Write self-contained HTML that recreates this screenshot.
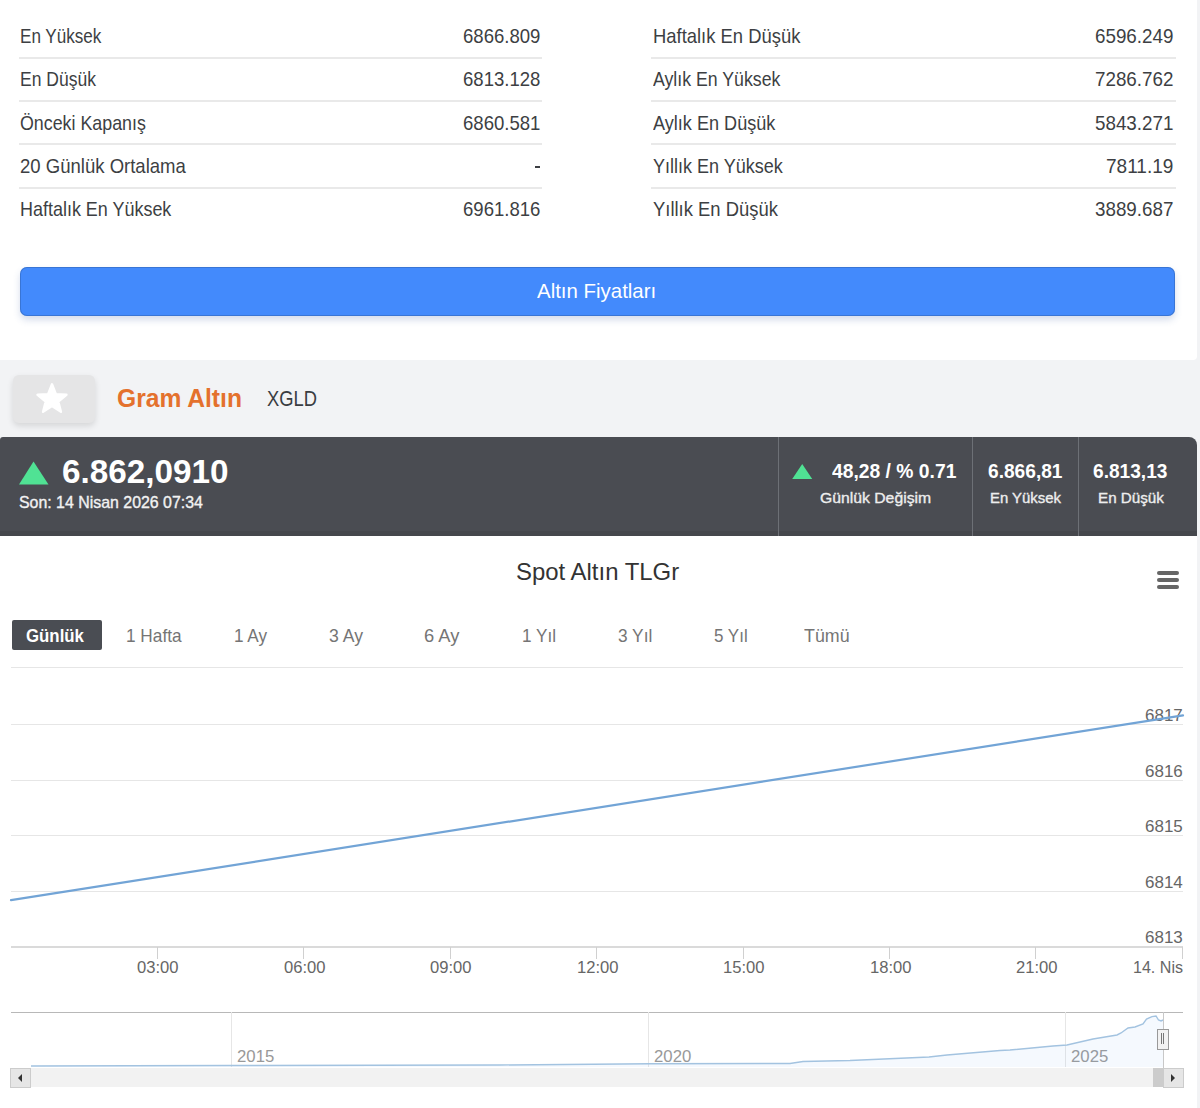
<!DOCTYPE html><html><head><meta charset="utf-8"><style>
html,body{margin:0;padding:0;}
body{width:1200px;height:1108px;position:relative;overflow:hidden;background:#f2f3f5;font-family:"Liberation Sans",sans-serif;}
.t{position:absolute;white-space:nowrap;transform-origin:0 0;}
.b{position:absolute;}
</style></head><body>
<div class="b" style="left:0;top:0;width:1197px;height:360px;background:#fff;border-radius:0 0 4px 0;"></div>
<div class="b" style="left:19px;top:56.8px;width:523px;height:2px;background:#e9e9e9;"></div>
<div class="b" style="left:651px;top:56.8px;width:525px;height:2px;background:#e9e9e9;"></div>
<div class="b" style="left:19px;top:100.1px;width:523px;height:2px;background:#e9e9e9;"></div>
<div class="b" style="left:651px;top:100.1px;width:525px;height:2px;background:#e9e9e9;"></div>
<div class="b" style="left:19px;top:143.4px;width:523px;height:2px;background:#e9e9e9;"></div>
<div class="b" style="left:651px;top:143.4px;width:525px;height:2px;background:#e9e9e9;"></div>
<div class="b" style="left:19px;top:186.7px;width:523px;height:2px;background:#e9e9e9;"></div>
<div class="b" style="left:651px;top:186.7px;width:525px;height:2px;background:#e9e9e9;"></div>
<div class="t" style="left:20.00px;top:25.89px;font-size:20.20px;line-height:20.20px;color:#3d3f43;transform:scaleX(0.8468);">En Yüksek</div>
<div class="t" style="left:462.50px;top:25.89px;font-size:20.20px;line-height:20.20px;color:#3d3f43;transform:scaleX(0.9197);">6866.809</div>
<div class="t" style="left:20.00px;top:69.29px;font-size:20.20px;line-height:20.20px;color:#3d3f43;transform:scaleX(0.8674);">En Düşük</div>
<div class="t" style="left:462.50px;top:69.29px;font-size:20.20px;line-height:20.20px;color:#3d3f43;transform:scaleX(0.9197);">6813.128</div>
<div class="t" style="left:20.00px;top:112.59px;font-size:20.20px;line-height:20.20px;color:#3d3f43;transform:scaleX(0.8834);">Önceki Kapanış</div>
<div class="t" style="left:462.50px;top:112.59px;font-size:20.20px;line-height:20.20px;color:#3d3f43;transform:scaleX(0.9197);">6860.581</div>
<div class="t" style="left:20.00px;top:155.89px;font-size:20.20px;line-height:20.20px;color:#3d3f43;transform:scaleX(0.9180);">20 Günlük Ortalama</div>
<div class="b" style="left:535px;top:166.0px;width:5px;height:1.6px;background:#3d3f43;"></div>
<div class="t" style="left:20.00px;top:199.19px;font-size:20.20px;line-height:20.20px;color:#3d3f43;transform:scaleX(0.8893);">Haftalık En Yüksek</div>
<div class="t" style="left:462.50px;top:199.19px;font-size:20.20px;line-height:20.20px;color:#3d3f43;transform:scaleX(0.9197);">6961.816</div>
<div class="t" style="left:652.50px;top:25.89px;font-size:20.20px;line-height:20.20px;color:#3d3f43;transform:scaleX(0.9120);">Haftalık En Düşük</div>
<div class="t" style="left:1095.00px;top:25.89px;font-size:20.20px;line-height:20.20px;color:#3d3f43;transform:scaleX(0.9315);">6596.249</div>
<div class="t" style="left:652.50px;top:69.29px;font-size:20.20px;line-height:20.20px;color:#3d3f43;transform:scaleX(0.8776);">Aylık En Yüksek</div>
<div class="t" style="left:1095.00px;top:69.29px;font-size:20.20px;line-height:20.20px;color:#3d3f43;transform:scaleX(0.9315);">7286.762</div>
<div class="t" style="left:652.50px;top:112.59px;font-size:20.20px;line-height:20.20px;color:#3d3f43;transform:scaleX(0.8964);">Aylık En Düşük</div>
<div class="t" style="left:1095.00px;top:112.59px;font-size:20.20px;line-height:20.20px;color:#3d3f43;transform:scaleX(0.9315);">5843.271</div>
<div class="t" style="left:652.50px;top:155.89px;font-size:20.20px;line-height:20.20px;color:#3d3f43;transform:scaleX(0.8926);">Yıllık En Yüksek</div>
<div class="t" style="left:1106.00px;top:155.89px;font-size:20.20px;line-height:20.20px;color:#3d3f43;transform:scaleX(0.9435);">7811.19</div>
<div class="t" style="left:652.50px;top:199.19px;font-size:20.20px;line-height:20.20px;color:#3d3f43;transform:scaleX(0.9123);">Yıllık En Düşük</div>
<div class="t" style="left:1095.00px;top:199.19px;font-size:20.20px;line-height:20.20px;color:#3d3f43;transform:scaleX(0.9315);">3889.687</div>
<div class="b" style="left:20px;top:266.5px;width:1155px;height:49.5px;background:#438afc;border-radius:7px;box-shadow:inset 0 0 0 1px rgba(50,100,180,0.55),0 4px 7px rgba(70,100,170,0.22);"></div>
<div class="t" style="left:536.70px;top:281.02px;font-size:20.64px;line-height:20.64px;color:#ffffff;transform:scaleX(0.9906);">Altın Fiyatları</div>
<div class="b" style="left:13px;top:374.5px;width:82px;height:48.5px;background:#e5e5e6;border-radius:6px;box-shadow:0 3px 6px rgba(0,0,0,0.12);"></div>
<svg class="b" style="left:35.5px;top:383px;" width="32" height="32" viewBox="0 0 32 32"><path d="M16.00 1.30 L19.88 11.16 L30.46 11.80 L22.28 18.54 L24.93 28.80 L16.00 23.10 L7.07 28.80 L9.72 18.54 L1.54 11.80 L12.12 11.16 Z" fill="#fff" stroke="#fff" stroke-width="2.4" stroke-linejoin="round"/></svg>
<div class="t" style="left:117.00px;top:384.84px;font-size:26.16px;line-height:26.16px;color:#e4712d;font-weight:bold;transform:scaleX(0.9414);">Gram Altın</div>
<div class="t" style="left:267.00px;top:388.03px;font-size:21.22px;line-height:21.22px;color:#3a3d42;transform:scaleX(0.8653);">XGLD</div>
<div class="b" style="left:0;top:436.5px;width:1197px;height:99px;background:#4a4c52;border-radius:3px 8px 0 0;"></div>
<svg class="b" style="left:19px;top:461px;" width="30" height="24" viewBox="0 0 30 24"><path d="M14.5 0.5 L29.5 23.5 L0 23.5 Z" fill="#50e294"/></svg>
<div class="t" style="left:62.40px;top:455.33px;font-size:33.14px;line-height:33.14px;color:#ffffff;font-weight:bold;transform:scaleX(1.0044);">6.862,0910</div>
<div class="t" style="left:19.00px;top:494.70px;font-size:15.70px;line-height:15.70px;color:#f2f2f2;transform:scaleX(1.0135);-webkit-text-stroke:0.35px #f2f2f2;">Son: 14 Nisan 2026 07:34</div>
<div class="b" style="left:0;top:531px;width:1197px;height:4.5px;background:#45474c;"></div>
<div class="b" style="left:777.5px;top:436.5px;width:1px;height:99px;background:#6d7076;"></div>
<div class="b" style="left:971.8px;top:436.5px;width:1px;height:99px;background:#6d7076;"></div>
<div class="b" style="left:1077.8px;top:436.5px;width:1px;height:99px;background:#6d7076;"></div>
<svg class="b" style="left:792px;top:463.5px;" width="21" height="16" viewBox="0 0 21 16"><path d="M10.2 0 L20.2 15 L0.2 15 Z" fill="#50e294"/></svg>
<div class="t" style="left:832.00px;top:462.46px;font-size:19.77px;line-height:19.77px;color:#ffffff;font-weight:bold;transform:scaleX(0.9758);">48,28 / % 0.71</div>
<div class="t" style="left:819.50px;top:490.07px;font-size:15.26px;line-height:15.26px;color:#eeeeee;transform:scaleX(1.0323);-webkit-text-stroke:0.35px #eeeeee;">Günlük Değişim</div>
<div class="t" style="left:987.50px;top:462.46px;font-size:19.77px;line-height:19.77px;color:#ffffff;font-weight:bold;transform:scaleX(0.9681);">6.866,81</div>
<div class="t" style="left:990.00px;top:490.47px;font-size:15.26px;line-height:15.26px;color:#eeeeee;transform:scaleX(0.9765);-webkit-text-stroke:0.35px #eeeeee;">En Yüksek</div>
<div class="t" style="left:1093.30px;top:462.46px;font-size:19.77px;line-height:19.77px;color:#ffffff;font-weight:bold;transform:scaleX(0.9668);">6.813,13</div>
<div class="t" style="left:1097.80px;top:490.47px;font-size:15.26px;line-height:15.26px;color:#eeeeee;transform:scaleX(0.9971);-webkit-text-stroke:0.35px #eeeeee;">En Düşük</div>
<div class="b" style="left:0;top:535.5px;width:1197px;height:580px;background:#fff;"></div>
<div class="t" style="left:515.80px;top:560.60px;font-size:23.26px;line-height:23.26px;color:#333333;transform:scaleX(1.0293);">Spot Altın TLGr</div>
<div class="b" style="left:1156.5px;top:570.8px;width:22.8px;height:4px;border-radius:2px;background:#666;"></div>
<div class="b" style="left:1156.5px;top:577.8px;width:22.8px;height:4px;border-radius:2px;background:#666;"></div>
<div class="b" style="left:1156.5px;top:584.8px;width:22.8px;height:4px;border-radius:2px;background:#666;"></div>
<div class="b" style="left:12.4px;top:619.6px;width:89.2px;height:30px;background:#4a4d53;border-radius:2px;"></div>
<div class="t" style="left:26.00px;top:628.38px;font-size:17.73px;line-height:17.73px;color:#ffffff;font-weight:bold;transform:scaleX(0.9492);">Günlük</div>
<div class="t" style="left:126.40px;top:628.28px;font-size:17.73px;line-height:17.73px;color:#757575;transform:scaleX(0.9722);">1 Hafta</div>
<div class="t" style="left:233.60px;top:628.28px;font-size:17.73px;line-height:17.73px;color:#757575;transform:scaleX(0.9682);">1 Ay</div>
<div class="t" style="left:329.00px;top:628.28px;font-size:17.73px;line-height:17.73px;color:#757575;transform:scaleX(0.9945);">3 Ay</div>
<div class="t" style="left:424.00px;top:628.28px;font-size:17.73px;line-height:17.73px;color:#757575;transform:scaleX(1.0354);">6 Ay</div>
<div class="t" style="left:521.70px;top:628.28px;font-size:17.73px;line-height:17.73px;color:#757575;transform:scaleX(0.9669);">1 Yıl</div>
<div class="t" style="left:618.20px;top:628.28px;font-size:17.73px;line-height:17.73px;color:#757575;transform:scaleX(0.9754);">3 Yıl</div>
<div class="t" style="left:714.30px;top:628.28px;font-size:17.73px;line-height:17.73px;color:#757575;transform:scaleX(0.9584);">5 Yıl</div>
<div class="t" style="left:804.00px;top:628.28px;font-size:17.73px;line-height:17.73px;color:#757575;transform:scaleX(1.0061);">Tümü</div>
<div class="b" style="left:11px;top:667px;width:1172px;height:1px;background:#e6e6e6;"></div>
<div class="b" style="left:11px;top:723.5px;width:1172px;height:1px;background:#e6e6e6;"></div>
<div class="b" style="left:11px;top:779.9px;width:1172px;height:1px;background:#e6e6e6;"></div>
<div class="b" style="left:11px;top:835.1px;width:1172px;height:1px;background:#e6e6e6;"></div>
<div class="b" style="left:11px;top:890.5px;width:1172px;height:1px;background:#e6e6e6;"></div>
<div class="b" style="left:11px;top:946px;width:1172px;height:2px;background:#dadada;"></div>
<div class="b" style="left:156.5px;top:947px;width:1px;height:12px;background:#d0d0d0;"></div>
<div class="b" style="left:303.0px;top:947px;width:1px;height:12px;background:#d0d0d0;"></div>
<div class="b" style="left:449.5px;top:947px;width:1px;height:12px;background:#d0d0d0;"></div>
<div class="b" style="left:596.0px;top:947px;width:1px;height:12px;background:#d0d0d0;"></div>
<div class="b" style="left:742.5px;top:947px;width:1px;height:12px;background:#d0d0d0;"></div>
<div class="b" style="left:889.0px;top:947px;width:1px;height:12px;background:#d0d0d0;"></div>
<div class="b" style="left:1035.3px;top:947px;width:1px;height:12px;background:#d0d0d0;"></div>
<div class="b" style="left:1182.0px;top:947px;width:1px;height:12px;background:#d0d0d0;"></div>
<div class="t" style="left:1145.20px;top:708.18px;font-size:15.84px;line-height:15.84px;color:#666666;transform:scaleX(1.0723);">6817</div>
<div class="t" style="left:1145.20px;top:763.58px;font-size:15.84px;line-height:15.84px;color:#666666;transform:scaleX(1.0723);">6816</div>
<div class="t" style="left:1145.20px;top:818.78px;font-size:15.84px;line-height:15.84px;color:#666666;transform:scaleX(1.0723);">6815</div>
<div class="t" style="left:1145.20px;top:875.18px;font-size:15.84px;line-height:15.84px;color:#666666;transform:scaleX(1.0723);">6814</div>
<div class="t" style="left:1145.20px;top:929.88px;font-size:15.84px;line-height:15.84px;color:#666666;transform:scaleX(1.0723);">6813</div>
<div class="t" style="left:137.20px;top:959.67px;font-size:16.57px;line-height:16.57px;color:#666666;transform:scaleX(1.0034);">03:00</div>
<div class="t" style="left:283.70px;top:959.67px;font-size:16.57px;line-height:16.57px;color:#666666;transform:scaleX(1.0034);">06:00</div>
<div class="t" style="left:430.20px;top:959.67px;font-size:16.57px;line-height:16.57px;color:#666666;transform:scaleX(1.0034);">09:00</div>
<div class="t" style="left:576.70px;top:959.67px;font-size:16.57px;line-height:16.57px;color:#666666;transform:scaleX(1.0034);">12:00</div>
<div class="t" style="left:723.20px;top:959.67px;font-size:16.57px;line-height:16.57px;color:#666666;transform:scaleX(1.0034);">15:00</div>
<div class="t" style="left:869.70px;top:959.67px;font-size:16.57px;line-height:16.57px;color:#666666;transform:scaleX(1.0034);">18:00</div>
<div class="t" style="left:1016.00px;top:959.67px;font-size:16.57px;line-height:16.57px;color:#666666;transform:scaleX(1.0034);">21:00</div>
<div class="t" style="left:1132.50px;top:959.67px;font-size:16.57px;line-height:16.57px;color:#666666;transform:scaleX(0.9696);">14. Nis</div>
<svg class="b" style="left:0;top:0;" width="1200" height="1108"><path d="M11 900.2 L1183 715.3" stroke="#72a4d6" stroke-width="2.2" fill="none" stroke-linecap="round"/></svg>
<div class="b" style="left:11px;top:1011.7px;width:1172px;height:1px;background:#b8b8b8;"></div>
<div class="b" style="left:231.0px;top:1012px;width:1px;height:55px;background:#e6e6e6;"></div>
<div class="b" style="left:648.0px;top:1012px;width:1px;height:55px;background:#e6e6e6;"></div>
<div class="b" style="left:1065.0px;top:1012px;width:1px;height:55px;background:#e6e6e6;"></div>
<div class="t" style="left:236.70px;top:1047.71px;font-size:16.28px;line-height:16.28px;color:#999999;transform:scaleX(1.0298);">2015</div>
<div class="t" style="left:653.50px;top:1047.71px;font-size:16.28px;line-height:16.28px;color:#999999;transform:scaleX(1.0298);">2020</div>
<div class="t" style="left:1071.00px;top:1047.71px;font-size:16.28px;line-height:16.28px;color:#999999;transform:scaleX(1.0298);">2025</div>
<svg class="b" style="left:0;top:0;" width="1200" height="1108"><path d="M31 1066 L230 1065.5 L500 1065 L650 1063.8 L790 1063.5 L803 1061.5 L850 1060.5 L929 1057 L947 1055 L1000 1050.5 L1010 1050 L1053 1046 L1067 1045 L1093 1039 L1117 1035 L1121 1033 L1128 1028 L1135 1027 L1143 1024 L1146.5 1019 L1152 1016.6 L1156 1016 L1158.5 1020 L1161 1021 L1163 1020 L1163 1067 L31 1067 Z" fill="rgba(124,181,236,0.08)"/><path d="M31 1066 L230 1065.5 L500 1065 L650 1063.8 L790 1063.5 L803 1061.5 L850 1060.5 L929 1057 L947 1055 L1000 1050.5 L1010 1050 L1053 1046 L1067 1045 L1093 1039 L1117 1035 L1121 1033 L1128 1028 L1135 1027 L1143 1024 L1146.5 1019 L1152 1016.6 L1156 1016 L1158.5 1020 L1161 1021 L1163 1020" stroke="#a3c3e0" stroke-width="1.4" fill="none"/></svg>
<div class="b" style="left:1162.5px;top:1012px;width:1px;height:56px;background:#c8c8c8;"></div>
<div class="b" style="left:1157px;top:1028.7px;width:9.5px;height:19.5px;background:#f2f2f2;border:1px solid #999;"></div>
<div class="b" style="left:1160.5px;top:1033px;width:1px;height:11px;background:#777;"></div>
<div class="b" style="left:1163px;top:1033px;width:1px;height:11px;background:#777;"></div>
<div class="b" style="left:10px;top:1068px;width:1173px;height:19px;background:#f2f2f2;"></div>
<div class="b" style="left:1153px;top:1068px;width:10px;height:19px;background:#cccccc;"></div>
<div class="b" style="left:10px;top:1068px;width:19px;height:18px;background:#e6e6e6;border:1px solid #cccccc;border-width:1px 1px 1px 1px;"></div>
<div class="b" style="left:1163px;top:1068px;width:19px;height:18px;background:#e6e6e6;border:1px solid #cccccc;"></div>
<svg class="b" style="left:0;top:0;" width="1200" height="1108"><path d="M18 1078 L22 1074 L22 1082 Z" fill="#333"/><path d="M1175 1078 L1171 1074 L1171 1082 Z" fill="#333"/></svg>
</body></html>
